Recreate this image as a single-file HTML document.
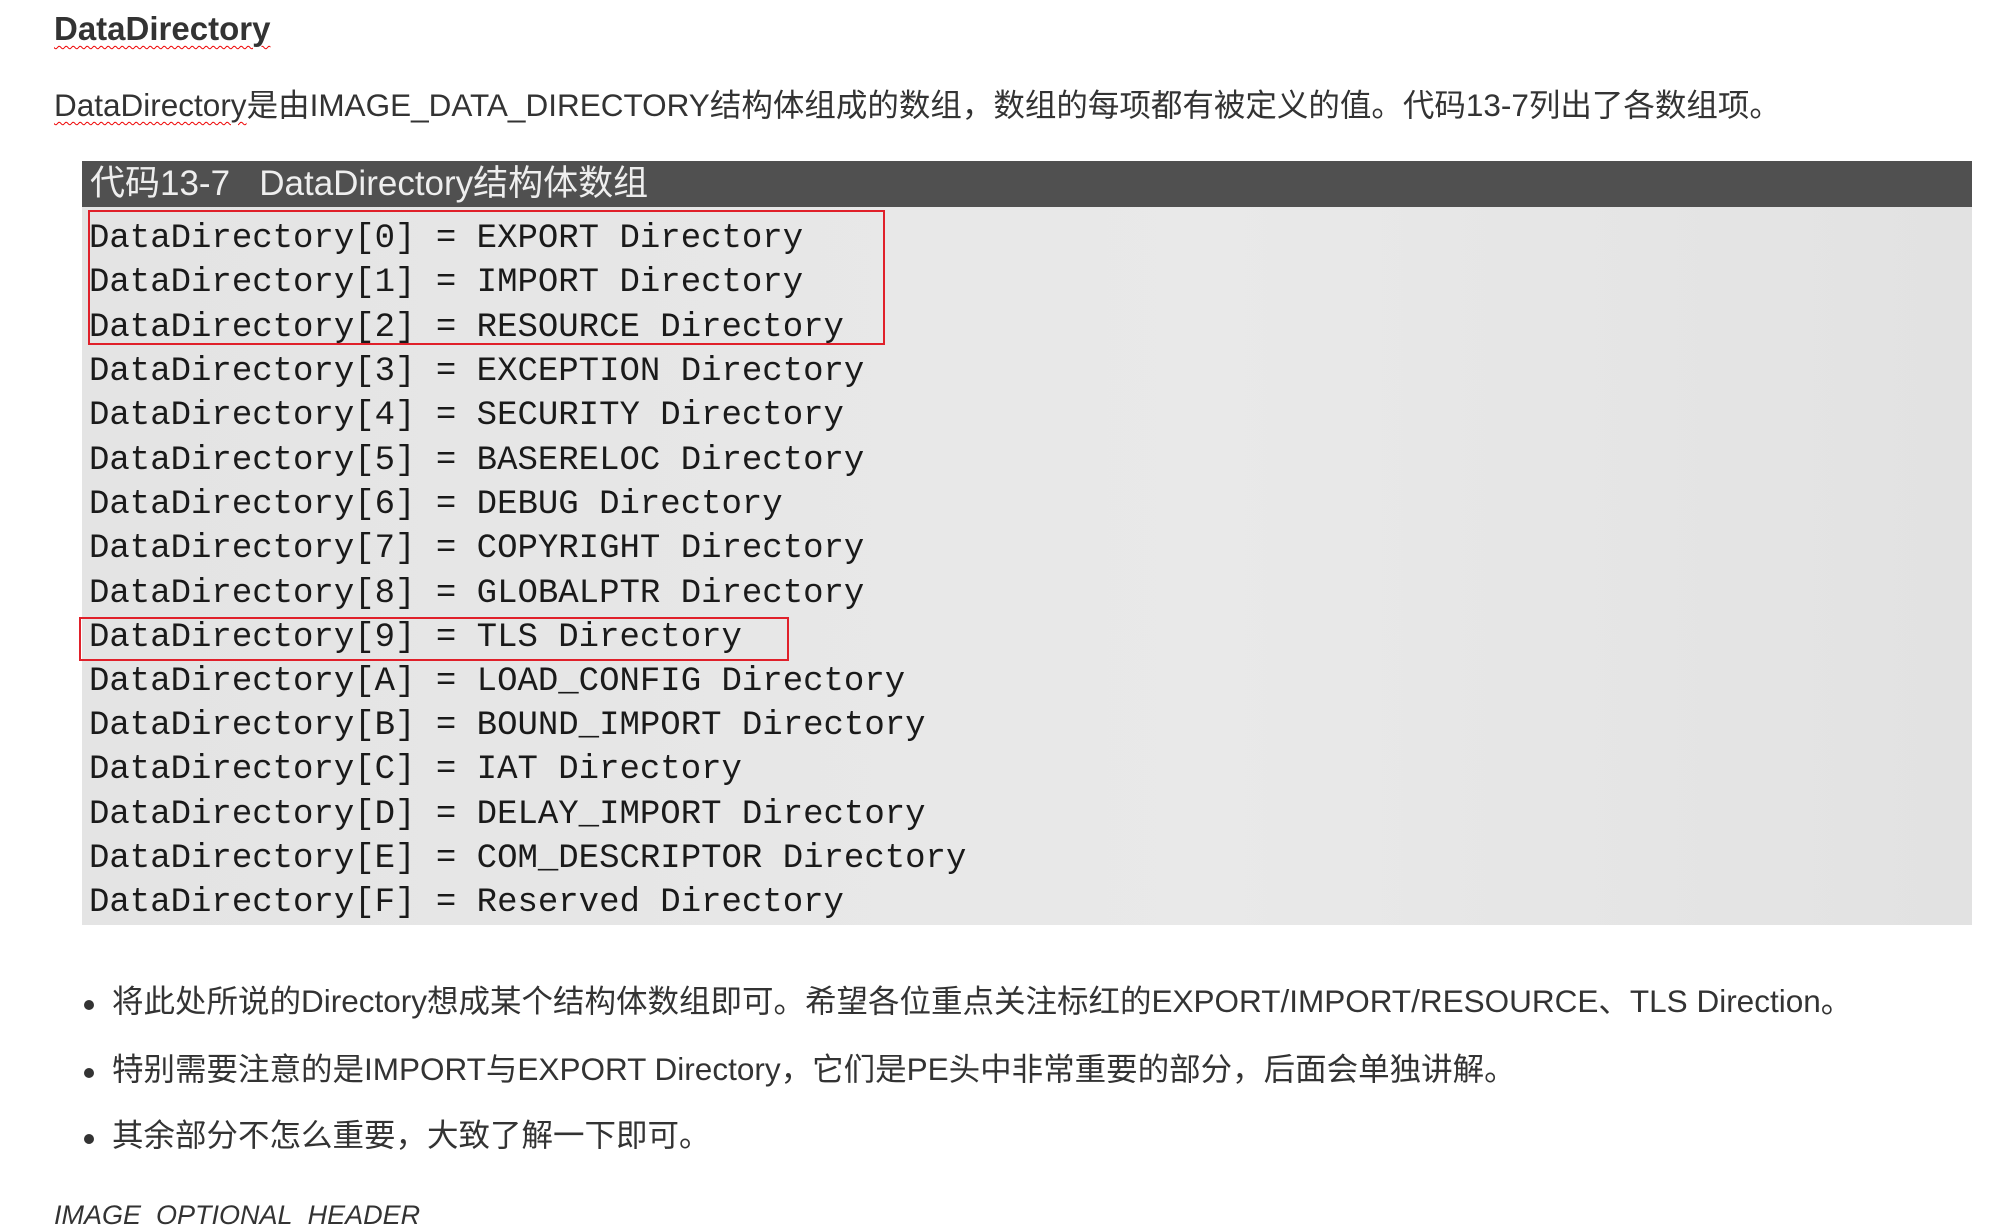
<!DOCTYPE html>
<html><head><meta charset="utf-8"><style>
html,body{margin:0;padding:0;background:#fff;width:1990px;height:1226px;overflow:hidden;position:relative;font-family:"Liberation Sans","Noto Sans CJK SC",sans-serif;color:#333;}
.abs{position:absolute;white-space:nowrap;}
.sq{text-decoration:underline wavy #e00;text-decoration-thickness:1px;text-underline-offset:5px;}
.code{position:absolute;left:82px;top:161px;width:1899px;height:764px;background:linear-gradient(90deg,#e4e4e4,#e9e9e9 60%,#e2e2e2);}
.hdr{position:absolute;left:0;top:0;width:100%;height:46px;background:#505050;color:#eee;font-size:35px;line-height:46px;padding-left:8px;box-sizing:border-box;}
.ln{position:absolute;left:7px;font-family:"Liberation Mono",monospace;font-size:34px;color:#1a1a1a;white-space:pre;line-height:40px;}
.box{position:absolute;border:2px solid #e0202a;}
.li{position:absolute;left:112px;font-size:31.5px;white-space:nowrap;}
.dot{position:absolute;left:84px;width:10px;height:10px;border-radius:50%;background:#333;}
</style></head><body>
<div class="abs" style="left:54px;top:10px;font-size:33px;font-weight:bold;"><span class="sq">DataDirectory</span></div>
<div class="abs" style="left:54px;top:80px;font-size:31.5px;"><span class="sq">DataDirectory</span>是由IMAGE_DATA_DIRECTORY结构体组成的数组，数组的每项都有被定义的值。代码13-7列出了各数组项。</div>
<div class="code" style="width:1890px">
<div class="hdr">代码13-7&nbsp;&nbsp;&nbsp;DataDirectory结构体数组</div>
<div class="ln" style="top:58px">DataDirectory[0] = EXPORT Directory</div>
<div class="ln" style="top:102px">DataDirectory[1] = IMPORT Directory</div>
<div class="ln" style="top:147px">DataDirectory[2] = RESOURCE Directory</div>
<div class="ln" style="top:191px">DataDirectory[3] = EXCEPTION Directory</div>
<div class="ln" style="top:235px">DataDirectory[4] = SECURITY Directory</div>
<div class="ln" style="top:280px">DataDirectory[5] = BASERELOC Directory</div>
<div class="ln" style="top:324px">DataDirectory[6] = DEBUG Directory</div>
<div class="ln" style="top:368px">DataDirectory[7] = COPYRIGHT Directory</div>
<div class="ln" style="top:413px">DataDirectory[8] = GLOBALPTR Directory</div>
<div class="ln" style="top:457px">DataDirectory[9] = TLS Directory</div>
<div class="ln" style="top:501px">DataDirectory[A] = LOAD_CONFIG Directory</div>
<div class="ln" style="top:545px">DataDirectory[B] = BOUND_IMPORT Directory</div>
<div class="ln" style="top:589px">DataDirectory[C] = IAT Directory</div>
<div class="ln" style="top:634px">DataDirectory[D] = DELAY_IMPORT Directory</div>
<div class="ln" style="top:678px">DataDirectory[E] = COM_DESCRIPTOR Directory</div>
<div class="ln" style="top:722px">DataDirectory[F] = Reserved Directory</div>
</div>
<div class="box" style="left:88px;top:210px;width:793px;height:131px"></div>
<div class="box" style="left:79px;top:617px;width:706px;height:40px"></div>
<div class="dot" style="top:1000px"></div>
<div class="li" style="top:976px">将此处所说的Directory想成某个结构体数组即可。希望各位重点关注标红的EXPORT/IMPORT/RESOURCE、TLS Direction。</div>
<div class="dot" style="top:1068px"></div>
<div class="li" style="top:1044px">特别需要注意的是IMPORT与EXPORT Directory，它们是PE头中非常重要的部分，后面会单独讲解。</div>
<div class="dot" style="top:1134px"></div>
<div class="li" style="top:1110px">其余部分不怎么重要，大致了解一下即可。</div>
<div class="abs" style="left:54px;top:1200px;font-size:27px;font-style:italic;">IMAGE_OPTIONAL_HEADER</div>
</body></html>
